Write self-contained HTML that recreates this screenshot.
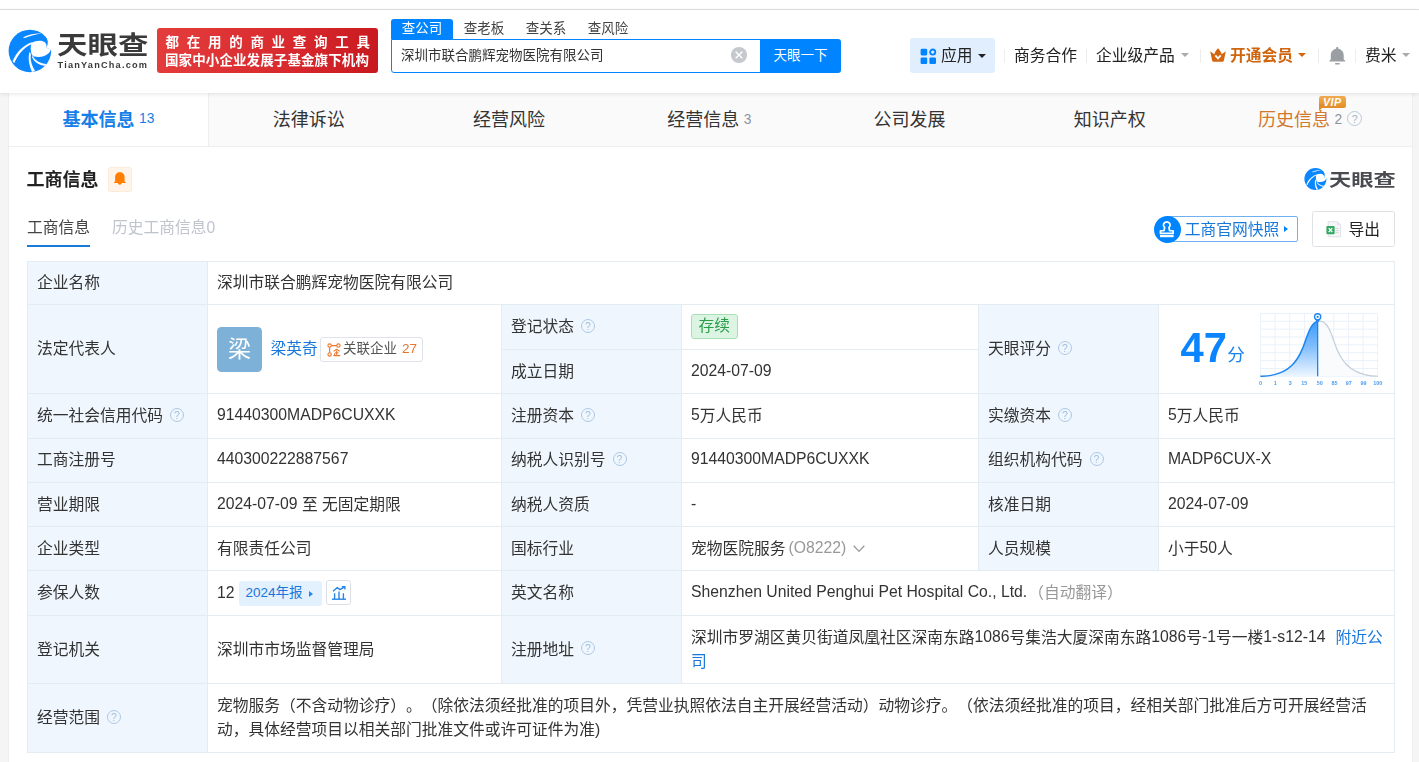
<!DOCTYPE html>
<html lang="zh-CN">
<head>
<meta charset="utf-8">
<title>深圳市联合鹏辉宠物医院有限公司 - 天眼查</title>
<style>
*{box-sizing:border-box;margin:0;padding:0}
html,body{width:1419px;height:762px;overflow:hidden}
body{background:#f5f5f5;font-family:"Liberation Sans","Noto Sans CJK SC",sans-serif;color:#333;font-size:15.75px;position:relative}
.abs{position:absolute}
#header,#tabs,#tb,#sectitle,#subtabs,#snap,#export,#wmname,#score{will-change:opacity}
a{color:#1777da;text-decoration:none}
/* top strip + header */
#topstrip{left:0;top:0;width:1419px;height:9px;background:#fff}
#topline{left:0;top:9px;width:1419px;height:1px;background:#e0e0e0}
#header{left:0;top:10px;width:1419px;height:83px;background:#fff;box-shadow:0 1px 4px rgba(0,0,0,.10);z-index:5}
/* main card */
#card{left:8px;top:93px;width:1405px;height:680px;background:#fff;border-left:1px solid #eee;border-right:1px solid #eee}
#tabs{left:9px;top:93px;width:1403px;height:54px;background:#fafafa;border-bottom:1px solid #eee}
#tabs .tab{position:absolute;top:0;height:53px;width:200.25px;padding-top:0.7px;text-align:center;font-size:18px;line-height:52px;color:#333;white-space:nowrap}
#tabs .tab.on{background:#fff;color:#1580e8;font-weight:bold}
#tabs .tabline{position:absolute;left:199px;top:0;width:1px;height:53px;background:#eee}
#tabs .tab small{font-size:13.8px;font-weight:normal;color:#8c939d;margin-left:4.5px;position:relative;top:-1.5px}
#tabs .tab.on small{color:#1580e8;top:-2.5px}
#tabs .tab.his{color:#d2782c}
#tabs .tab .tq{width:15px;height:15px;line-height:14.2px;font-size:10.5px;margin-left:5px;top:-2px;border-color:#b9cadb;color:#a3b5c8}
.vip{position:absolute;left:109.3px;top:3px;width:27px;height:12px;border-radius:2.5px;background:linear-gradient(180deg,#f2ad52,#e28d26);line-height:11px;text-align:center}
.vip:after{content:"";position:absolute;left:0;top:8px;width:0;height:0;border-left:0 solid transparent;border-right:7px solid transparent;border-top:7px solid #e28d26}
.vip b{position:relative;z-index:1;display:block;font-size:10.6px;font-style:italic;color:#fff;font-family:"Liberation Sans",sans-serif;letter-spacing:0.5px;line-height:12px;text-indent:-1px}

#lgname{left:56.5px;top:19.5px;font-size:25.2px;font-weight:700;color:#3a3a3a;line-height:30px;white-space:nowrap;transform:scaleX(1.21);transform-origin:0 0}
#lgurl{left:57.5px;top:49px;font-size:9.2px;font-weight:bold;color:#3a3a3a;line-height:12px;letter-spacing:1.2px;white-space:nowrap;font-family:"Liberation Sans",sans-serif}
#banner{left:157px;top:18px;width:221px;height:45px;border-radius:3px;background:linear-gradient(100deg,#e43d3d 0%,#d82a2e 60%,#c6181e 100%);color:#fff;font-weight:bold;font-size:13.5px;white-space:nowrap;padding-left:8.5px}
#banner .l1{letter-spacing:7.72px;line-height:18px;padding-top:6px;height:24px}
#banner .l2{line-height:18px;letter-spacing:0.1px;margin-left:-0.5px}
#stabs{left:391px;top:9px;height:20px;font-size:13.5px;line-height:20px;white-space:nowrap;color:#444}
#stabs span{display:inline-block;width:62px;text-align:center}
#stabs span.on{background:#0084ff;color:#fff;border-radius:3px 3px 0 0}
#sbox{left:391px;top:29px;width:370px;height:34px;border:1px solid #0084ff;border-radius:0 0 0 3px;background:#fff}
#sbox .qt{position:absolute;left:9px;top:0;line-height:32px;font-size:13.5px;color:#333;white-space:nowrap}
#sbtn{left:760px;top:29px;width:81px;height:34px;background:#0084ff;color:#fff;font-size:13.5px;line-height:34px;text-align:center;border-radius:0 3px 3px 0}
#app{left:910px;top:28px;width:85px;height:35px;background:#e0eefd;border-radius:3px;font-size:15.75px;line-height:35px;color:#222;white-space:nowrap}
.caret{width:0;height:0;border:4px solid transparent;border-top:4.5px solid #aaa;border-bottom:0}
.sep{width:1px;height:14px;background:#ececec;top:39px}
.nav{top:34px;line-height:24px;font-size:15.75px;color:#222;white-space:nowrap}
.vipn{color:#cf660f;font-weight:bold}

#sectitle{left:26.5px;top:166.8px;font-size:18px;font-weight:bold;line-height:26px;color:#222;white-space:nowrap}
#bellbox{left:108px;top:167px;width:24px;height:25px;background:#fff4ea;border:1px solid #fdebda;border-radius:2.5px}
#subtabs{left:27px;top:216px;line-height:24px;font-size:15.75px;white-space:nowrap}
#subtabs .on{color:#444}
#subtabs .off{color:#c0c4cc;margin-left:22px}
#subline{left:27px;top:245px;width:63px;height:2px;background:#1a7bd8}
#wmname{left:1329.3px;top:165.5px;font-size:17.5px;font-weight:bold;color:#4a4b51;line-height:28px;white-space:nowrap;transform:scaleX(1.27);transform-origin:0 0}
#snap{left:1154px;top:216px;width:144px;height:27px;white-space:nowrap}
#snap:before{content:"";position:absolute;left:13px;top:0px;right:0;height:24px;border:1px solid #6eb0f2;border-radius:0 2px 2px 0;background:#fff}
#snap .ring{position:absolute;left:0;top:0;width:27px;height:27px;border-radius:50%;background:#0084ff}
#snap .t{position:absolute;left:30.8px;top:-0.5px;line-height:27px;font-size:15.75px;color:#1777da}
#snap .tri{position:absolute;left:130px;top:9.5px;width:0;height:0;border:3.8px solid transparent;border-left:4.2px solid #0084ff;border-right:0}
#export{left:1312px;top:211px;width:83px;height:36px;border:1px solid #dfe1e5;border-radius:2.5px;background:#fff;font-size:15.75px;line-height:34px;color:#222}
#export span{position:absolute;left:35.5px;top:1.2px}

#tb{text-spacing-trim:space-all;left:27px;top:261px;width:1367px;border-collapse:collapse;table-layout:fixed;font-size:15.75px;line-height:24px;color:#333}
#tb td{border:1px solid #e3ebf3;padding:0 9px;vertical-align:middle;background:#fff;white-space:nowrap}
#tb td.l{background:#eff6fd;color:#333}
#tb td.ml{white-space:normal}
.q{display:inline-block;width:14px;height:14px;border:1.5px solid #adc9e6;border-radius:50%;font-style:normal;font-size:10.5px;font-weight:normal;line-height:13.6px;text-align:center;color:#a3c0dd;margin-left:7px;vertical-align:middle;position:relative;top:-2px;font-family:"Liberation Sans",sans-serif}
.g{color:#999}
.n{position:relative;top:-1px}
.n12{position:relative;top:0.5px}
.legal{position:relative;height:45px}
.legal .ava{position:absolute;left:0;top:0;width:45px;height:45px;border-radius:4.5px;background:#7eb1d8;color:#fff;font-size:23px;line-height:44px;text-align:center}
.legal .nm{position:absolute;left:53.5px;top:10px;line-height:24px}
.legal .rel{position:absolute;left:102.5px;top:10.5px;height:24.5px;width:103.5px;border:1px solid #dfe2e8;border-radius:3px;font-size:13.5px;line-height:22px}
.legal .rel svg{position:absolute;left:6px;top:4.5px}
.legal .rel em{position:absolute;left:22.5px;top:0;font-style:normal;color:#555}
.legal .rel b{position:absolute;left:81.5px;top:0;font-weight:normal;color:#e8732a}
.st{display:inline-block;height:24.5px;line-height:22.5px;padding:0 6.5px;border:1px solid #a9e0b8;background:#dcf5e3;color:#2a9d4a;border-radius:3px;position:relative;top:-0.5px}
.yr{display:inline-block;height:24.5px;line-height:24.5px;font-size:13.5px;color:#1777da;background:#e3f0fd;border-radius:3px;padding:0 8.5px 0 7px;margin-left:4px;vertical-align:middle;position:relative;top:0px}
.tri2{display:inline-block;width:0;height:0;border:3.7px solid transparent;border-left:4.5px solid #2a86e6;border-right:0;margin-left:6.5px;position:relative;top:0px}
.chartbtn{display:inline-block;width:24.5px;height:24.5px;border:1px solid #dcdfe6;border-radius:3px;margin-left:4.5px;vertical-align:middle;position:relative;top:-1px}
.chartbtn svg{position:absolute;left:5px;top:4.5px}
</style>
</head>
<body>

<div id="topstrip" class="abs"></div>
<div id="topline" class="abs"></div>
<div id="card" class="abs"></div>
<div id="header" class="abs">

<svg class="abs" style="left:4px;top:14px;width:54px;height:54px" viewBox="0 0 762 762"><circle cx="365" cy="380" r="300" fill="#0a86ff"/>
<path d="M525,118 C600,160 645,235 602,335 L662,362 L720,380 L720,60 Z" fill="#fff"/>
<path d="M390,265 C450,232 540,225 580,262 C600,285 604,310 601,336 L662,360 C640,425 560,492 410,455 C375,420 368,330 390,265 Z" fill="#fff"/>
<path d="M120,530 C170,400 280,290 398,258 L388,286 C292,322 200,425 146,550 Z" fill="#fff"/>
<path d="M395,676 C345,560 338,470 362,392 L380,425 C366,505 392,590 438,662 Z" fill="#fff"/>
<path d="M402,448 C440,520 520,560 598,564 L580,592 C500,582 428,542 396,470 Z" fill="#fff"/>
<path d="M266,190 C340,150 440,128 528,134 C450,146 370,166 296,197 Z" fill="#fff"/></svg>
<div class="abs" id="lgname">天眼查</div>
<div class="abs" id="lgurl">TianYanCha.com</div>
<div class="abs" id="banner"><div class="l1">都在用的商业查询工具</div><div class="l2">国家中小企业发展子基金旗下机构</div></div>
<div class="abs" id="stabs"><span class="on">查公司</span><span>查老板</span><span>查关系</span><span>查风险</span></div>
<div class="abs" id="sbox"><span class="qt">深圳市联合鹏辉宠物医院有限公司</span>
<svg class="abs" style="left:337.7px;top:6px" width="18" height="18" viewBox="0 0 18 18"><circle cx="9" cy="9" r="8.1" fill="#c5c8cd"/><path d="M5.7 5.7l6.6 6.6M12.3 5.7l-6.6 6.6" stroke="#fff" stroke-width="1.4" fill="none"/></svg></div>
<div class="abs" id="sbtn">天眼一下</div>
<div class="abs" id="app"><svg class="abs" style="left:10px;top:10px" width="17" height="17" viewBox="0 0 17 17"><rect x="0.6" y="0.8" width="6.6" height="6.6" rx="1.3" fill="#0084ff"/><rect x="0.6" y="9.4" width="6.6" height="6.6" rx="1.3" fill="#0084ff"/><rect x="9.4" y="9.4" width="6.6" height="6.6" rx="1.3" fill="#0084ff"/><circle cx="12.7" cy="4.1" r="2.6" fill="none" stroke="#0084ff" stroke-width="1.8"/></svg><span class="abs" style="left:31px;top:0">应用</span><i class="caret abs" style="left:68px;top:16px;border-top-color:#222"></i></div>
<i class="sep abs" style="left:1004px"></i><span class="nav abs" style="left:1014px">商务合作</span>
<i class="sep abs" style="left:1086px"></i><span class="nav abs" style="left:1096px">企业级产品</span><i class="caret abs" style="left:1181px;top:43px"></i>
<i class="sep abs" style="left:1200px"></i>
<svg class="abs" style="left:1210px;top:38px" width="16" height="14" viewBox="0 0 16 14"><path d="M0.2 3.2 L4.3 6.3 C4.9 3.9 6.4 1.9 8 0.3 C9.6 1.9 11.1 3.9 11.7 6.3 L15.8 3.2 L13.9 12.4 Q13.7 13.8 12.3 13.8 L3.7 13.8 Q2.3 13.8 2.1 12.4 Z" fill="#d4650f"/><path d="M5.3 7.4 L8 10.4 L10.7 7.4" stroke="#fff" stroke-width="1.8" fill="none"/></svg>
<span class="nav abs vipn" style="left:1230px">开通会员</span><i class="caret abs" style="left:1298px;top:43px;border-top-color:#d4650f"></i>
<i class="sep abs" style="left:1318px"></i>
<svg class="abs" style="left:1329px;top:36px" width="17" height="19" viewBox="0 0 17 19"><path d="M8.25 1.1 C8.9 1.1 9.4 1.6 9.4 2.3 L9.4 2.8 C12.4 3.4 14.7 5.8 14.7 9.3 L14.7 13.6 L16.1 14.4 L16.1 15.5 L0.5 15.5 L0.5 14.4 L1.8 13.6 L1.8 9.3 C1.8 5.8 4.1 3.4 7.1 2.8 L7.1 2.3 C7.1 1.6 7.6 1.1 8.25 1.1 Z" fill="#9b9ea3"/><rect x="6" y="17.1" width="4.8" height="1.4" rx="0.7" fill="#9b9ea3"/></svg>
<i class="sep abs" style="left:1355px"></i><span class="nav abs" style="left:1365px">费米</span><i class="caret abs" style="left:1402px;top:43px"></i>

</div>
<div id="tabs" class="abs">
<div class="tab on" style="left:0;width:199px;padding-left:0.00px">基本信息<small>13</small></div>
<div class="tab" style="left:199.62px">法律诉讼</div>
<div class="tab" style="left:399.88px">经营风险</div>
<div class="tab" style="left:600.12px">经营信息<small>3</small></div>
<div class="tab" style="left:800.38px">公司发展</div>
<div class="tab" style="left:1000.62px">知识产权</div>
<div class="tabline"></div>
<div class="tab his" style="left:1200.88px">历史信息<small>2</small><i class="q tq">?</i><span class="vip"><b>VIP</b></span></div>
</div>

<div class="abs" id="sectitle">工商信息</div>
<div class="abs" id="bellbox"><svg width="14" height="14" viewBox="0 0 14 14" style="position:absolute;left:4px;top:4px"><path d="M6.85 0.3 C9.7 0.3 11.6 2.4 11.6 5.2 L11.6 9.5 L12.7 10.3 L12.7 11.1 L1.0 11.1 L1.0 10.3 L2.1 9.5 L2.1 5.2 C2.1 2.4 4.0 0.3 6.85 0.3 Z M4.9 11.1 L8.8 11.1 C8.6 12.2 7.9 12.7 6.85 12.7 C5.8 12.7 5.1 12.2 4.9 11.1 Z" fill="#ff7f00"/></svg></div>
<div class="abs" id="subtabs"><span class="on">工商信息</span><span class="off">历史工商信息0</span></div>
<div class="abs" id="subline"></div>
<svg class="abs" style="left:1301.6px;top:165.3px;width:28px;height:28px" viewBox="0 0 762 762"><circle cx="365" cy="380" r="300" fill="#0a86ff"/>
<path d="M525,118 C600,160 645,235 602,335 L662,362 L720,380 L720,60 Z" fill="#fff"/>
<path d="M390,265 C450,232 540,225 580,262 C600,285 604,310 601,336 L662,360 C640,425 560,492 410,455 C375,420 368,330 390,265 Z" fill="#fff"/>
<path d="M120,530 C170,400 280,290 398,258 L388,286 C292,322 200,425 146,550 Z" fill="#fff"/>
<path d="M395,676 C345,560 338,470 362,392 L380,425 C366,505 392,590 438,662 Z" fill="#fff"/>
<path d="M402,448 C440,520 520,560 598,564 L580,592 C500,582 428,542 396,470 Z" fill="#fff"/>
<path d="M266,190 C340,150 440,128 528,134 C450,146 370,166 296,197 Z" fill="#fff"/></svg>
<div class="abs" id="wmname">天眼查</div>
<div class="abs" id="snap"><span class="ring"><svg width="19.6" height="19" viewBox="0 0 17 17" preserveAspectRatio="none" style="position:absolute;left:2.9px;top:4.2px"><path d="M8.5 1.6 a2.9 2.9 0 0 1 1.9 5.1 L10.9 9.6 L14 9.6 L14 12 L3 12 L3 9.6 L6.1 9.6 L6.6 6.7 A2.9 2.9 0 0 1 8.5 1.6 Z" fill="none" stroke="#fff" stroke-width="1.5" stroke-linejoin="round"/><rect x="2.6" y="13.4" width="11.8" height="2" fill="#fff"/></svg></span><span class="t">工商官网快照</span><i class="tri"></i></div>
<div class="abs" id="export"><svg width="17" height="17" viewBox="0 0 17 17" style="position:absolute;left:13px;top:9px"><path d="M2.2 0.6 L11.2 0.6 L14.6 4 L14.6 15.8 L2.2 15.8 Z" fill="#f5f6f8" stroke="#d9dce1" stroke-width="0.8"/><path d="M11.2 0.6 L11.2 4 L14.6 4 Z" fill="#e1e4e8"/><path d="M9.6 7.4h3M9.6 9.4h3M9.6 11.4h3" stroke="#d4d7dc" stroke-width="1"/><rect x="0.4" y="5" width="8.2" height="8.2" rx="0.9" fill="#33a862"/><path d="M2.7 7.1 L6.3 11.1 M6.3 7.1 L2.7 11.1" stroke="#fff" stroke-width="1.4"/></svg><span>导出</span></div>


<table class="abs" id="tb" cellspacing="0" cellpadding="0">
<colgroup><col style="width:180px"><col style="width:294px"><col style="width:180px"><col style="width:297px"><col style="width:180px"><col style="width:236px"></colgroup>
<tr style="height:43px"><td class="l">企业名称</td><td colspan="5">深圳市联合鹏辉宠物医院有限公司</td></tr>
<tr style="height:45px"><td class="l" rowspan="2">法定代表人</td><td rowspan="2"><div class="legal"><span class="ava">梁</span><a class="nm">梁英奇</a><span class="rel"><svg width="14" height="14" viewBox="0 0 14 14"><g fill="none" stroke="#f0782d" stroke-width="1.1"><circle cx="2.6" cy="2.6" r="1.7"/><circle cx="11.4" cy="2.6" r="1.7"/><circle cx="2.6" cy="11.4" r="1.7"/><path d="M4.3 2.6H9.7M2.6 4.3V9.7"/><path d="M9.6 6.2 L6.6 8.4 M9.6 6.2 L12.8 8.4 M9.7 7.6V12.4 M8 9.8H11.4 M7.6 10.2V12.4 M6.4 12.6H13.2"/></g></svg><em>关联企业</em><b>27</b></span></div></td><td class="l">登记状态<i class="q">?</i></td><td><span class="st">存续</span></td><td class="l" rowspan="2">天眼评分<i class="q">?</i></td><td rowspan="2" class="scoretd"><!--SCORE--></td></tr>
<tr style="height:44px"><td class="l">成立日期</td><td><span class="n">2024-07-09</span></td></tr>
<tr style="height:44.5px"><td class="l">统一社会信用代码<i class="q">?</i></td><td><span class="n">91440300MADP6CUXXK</span></td><td class="l">注册资本<i class="q">?</i></td><td><span class="n">5</span>万人民币</td><td class="l">实缴资本<i class="q">?</i></td><td><span class="n">5</span>万人民币</td></tr>
<tr style="height:44.5px"><td class="l">工商注册号</td><td><span class="n">440300222887567</span></td><td class="l">纳税人识别号<i class="q">?</i></td><td><span class="n">91440300MADP6CUXXK</span></td><td class="l">组织机构代码<i class="q">?</i></td><td><span class="n">MADP6CUX-X</span></td></tr>
<tr style="height:44px"><td class="l">营业期限</td><td><span class="n">2024-07-09</span> 至 无固定期限</td><td class="l">纳税人资质</td><td><span class="n">-</span></td><td class="l">核准日期</td><td><span class="n">2024-07-09</span></td></tr>
<tr style="height:44px"><td class="l">企业类型</td><td>有限责任公司</td><td class="l">国标行业</td><td>宠物医院服务<span class="g n" style="margin-left:3px">(O8222)</span><svg width="12" height="8" viewBox="0 0 12 8" style="margin-left:7px;position:relative;top:-1px"><path d="M0.7 0.8 L6 6.4 L11.3 0.8" fill="none" stroke="#999" stroke-width="1.3"/></svg></td><td class="l">人员规模</td><td>小于<span class="n">50</span>人</td></tr>
<tr style="height:45px"><td class="l">参保人数</td><td><span class="n12">12</span><span class="yr">2024年报<i class="tri2"></i></span><span class="chartbtn"><svg width="14" height="14" viewBox="0 0 14 14"><g fill="none" stroke="#2a86e6" stroke-width="1.4"><path d="M0 13.2H14"/><path d="M2.6 13V7.2M7 13V5.6M11.4 13V7.2"/><path d="M1 5.2 L5.2 1.6 L8 3.6 L12.6 0.8"/><path d="M9.8 0.7H12.9V3.6"/></g></svg></span></td><td class="l">英文名称</td><td colspan="3"><span class="n">Shenzhen United Penghui Pet Hospital Co., Ltd.</span><span class="g" style="margin-left:1px">（自动翻译）</span></td></tr>
<tr style="height:68px"><td class="l">登记机关</td><td>深圳市市场监督管理局</td><td class="l">注册地址<i class="q">?</i></td><td colspan="3" class="ml">深圳市罗湖区黄贝街道凤凰社区深南东路<span class="n">1086</span>号集浩大厦深南东路<span class="n">1086</span>号<span class="n">-1</span>号一楼<span class="n">1-s12-14</span><a style="margin-left:10px">附近公司</a></td></tr>
<tr style="height:69px"><td class="l">经营范围<i class="q">?</i></td><td colspan="5" class="ml">宠物服务（不含动物诊疗）。（除依法须经批准的项目外，凭营业执照依法自主开展经营活动）动物诊疗。（依法须经批准的项目，经相关部门批准后方可开展经营活动，具体经营项目以相关部门批准文件或许可证件为准)</td></tr>
</table>
<svg class="abs" id="score" style="left:1159px;top:305px" width="235" height="88" viewBox="0 0 235 88">
<defs><linearGradient id="sg" x1="0" y1="0" x2="0" y2="1"><stop offset="0" stop-color="#3a9bff"/><stop offset="0.45" stop-color="#7fbdfd"/><stop offset="1" stop-color="#eef6ff"/></linearGradient>
<clipPath id="cl"><rect x="0" y="0" width="158.65" height="88"/></clipPath><clipPath id="cr"><rect x="158.65" y="0" width="100" height="88"/></clipPath></defs>
<text x="21.6" y="57.2" font-family="Liberation Sans,sans-serif" font-weight="bold" font-size="42.4" textLength="46.4" lengthAdjust="spacingAndGlyphs" fill="#0a84ff">47</text>
<text x="68.3" y="56" font-family="Liberation Sans,Noto Sans CJK SC,sans-serif" font-size="17.6" fill="#1a83ee">分</text>
<path d="M101.38,8.38 V71.35 M116.05,8.38 V71.35 M130.71,8.38 V71.35 M145.38,8.38 V71.35 M160.05,8.38 V71.35 M174.71,8.38 V71.35 M189.38,8.38 V71.35 M204.05,8.38 V71.35 M218.71,8.38 V71.35 M101.38,8.38 H218.71 M101.38,16.25 H218.71 M101.38,24.12 H218.71 M101.38,32.00 H218.71 M101.38,39.87 H218.71 M101.38,47.74 H218.71 M101.38,55.61 H218.71 M101.38,63.48 H218.71 M101.38,71.35 H218.71 " stroke="#e9f1fb" stroke-width="1" fill="none"/>
<path d="M101.38,71.35 C103.18,71.19 108.92,70.96 112.15,70.38 C115.38,69.81 118.07,68.97 120.76,67.91 C123.45,66.85 126.14,65.43 128.29,64.03 C130.45,62.63 131.88,61.43 133.67,59.51 C135.47,57.59 137.44,55.12 139.06,52.52 C140.67,49.91 141.93,47.28 143.36,43.90 C144.80,40.53 146.41,35.56 147.67,32.28 C148.92,29.00 149.82,26.38 150.90,24.21 C151.97,22.03 153.05,20.49 154.13,19.25 C155.20,18.02 156.28,17.30 157.36,16.78 C158.43,16.26 159.51,16.13 160.59,16.13 C161.66,16.13 162.74,16.26 163.81,16.78 C164.89,17.30 165.97,18.02 167.04,19.25 C168.12,20.49 169.20,22.03 170.27,24.21 C171.35,26.38 172.25,29.00 173.50,32.28 C174.76,35.56 176.37,40.53 177.81,43.90 C179.24,47.28 180.50,49.91 182.11,52.52 C183.73,55.12 185.70,57.59 187.50,59.51 C189.29,61.43 190.73,62.63 192.88,64.03 C195.03,65.43 197.72,66.85 200.41,67.91 C203.10,68.97 205.97,69.81 209.02,70.38 C212.07,70.96 217.10,71.19 218.71,71.35 Z" fill="#fafbfd" clip-path="url(#cr)"/>
<path d="M101.38,71.35 C103.18,71.19 108.92,70.96 112.15,70.38 C115.38,69.81 118.07,68.97 120.76,67.91 C123.45,66.85 126.14,65.43 128.29,64.03 C130.45,62.63 131.88,61.43 133.67,59.51 C135.47,57.59 137.44,55.12 139.06,52.52 C140.67,49.91 141.93,47.28 143.36,43.90 C144.80,40.53 146.41,35.56 147.67,32.28 C148.92,29.00 149.82,26.38 150.90,24.21 C151.97,22.03 153.05,20.49 154.13,19.25 C155.20,18.02 156.28,17.30 157.36,16.78 C158.43,16.26 159.51,16.13 160.59,16.13 C161.66,16.13 162.74,16.26 163.81,16.78 C164.89,17.30 165.97,18.02 167.04,19.25 C168.12,20.49 169.20,22.03 170.27,24.21 C171.35,26.38 172.25,29.00 173.50,32.28 C174.76,35.56 176.37,40.53 177.81,43.90 C179.24,47.28 180.50,49.91 182.11,52.52 C183.73,55.12 185.70,57.59 187.50,59.51 C189.29,61.43 190.73,62.63 192.88,64.03 C195.03,65.43 197.72,66.85 200.41,67.91 C203.10,68.97 205.97,69.81 209.02,70.38 C212.07,70.96 217.10,71.19 218.71,71.35" fill="none" stroke="#c2cedb" stroke-width="1.25" clip-path="url(#cr)"/>
<path d="M101.38,71.35 C103.18,71.19 108.92,70.96 112.15,70.38 C115.38,69.81 118.07,68.97 120.76,67.91 C123.45,66.85 126.14,65.43 128.29,64.03 C130.45,62.63 131.88,61.43 133.67,59.51 C135.47,57.59 137.44,55.12 139.06,52.52 C140.67,49.91 141.93,47.28 143.36,43.90 C144.80,40.53 146.41,35.56 147.67,32.28 C148.92,29.00 149.82,26.38 150.90,24.21 C151.97,22.03 153.05,20.49 154.13,19.25 C155.20,18.02 156.28,17.30 157.36,16.78 C158.43,16.26 159.51,16.13 160.59,16.13 C161.66,16.13 162.74,16.26 163.81,16.78 C164.89,17.30 165.97,18.02 167.04,19.25 C168.12,20.49 169.20,22.03 170.27,24.21 C171.35,26.38 172.25,29.00 173.50,32.28 C174.76,35.56 176.37,40.53 177.81,43.90 C179.24,47.28 180.50,49.91 182.11,52.52 C183.73,55.12 185.70,57.59 187.50,59.51 C189.29,61.43 190.73,62.63 192.88,64.03 C195.03,65.43 197.72,66.85 200.41,67.91 C203.10,68.97 205.97,69.81 209.02,70.38 C212.07,70.96 217.10,71.19 218.71,71.35 Z" fill="url(#sg)" clip-path="url(#cl)"/>
<path d="M101.38,71.35 C103.18,71.19 108.92,70.96 112.15,70.38 C115.38,69.81 118.07,68.97 120.76,67.91 C123.45,66.85 126.14,65.43 128.29,64.03 C130.45,62.63 131.88,61.43 133.67,59.51 C135.47,57.59 137.44,55.12 139.06,52.52 C140.67,49.91 141.93,47.28 143.36,43.90 C144.80,40.53 146.41,35.56 147.67,32.28 C148.92,29.00 149.82,26.38 150.90,24.21 C151.97,22.03 153.05,20.49 154.13,19.25 C155.20,18.02 156.28,17.30 157.36,16.78 C158.43,16.26 159.51,16.13 160.59,16.13 C161.66,16.13 162.74,16.26 163.81,16.78 C164.89,17.30 165.97,18.02 167.04,19.25 C168.12,20.49 169.20,22.03 170.27,24.21 C171.35,26.38 172.25,29.00 173.50,32.28 C174.76,35.56 176.37,40.53 177.81,43.90 C179.24,47.28 180.50,49.91 182.11,52.52 C183.73,55.12 185.70,57.59 187.50,59.51 C189.29,61.43 190.73,62.63 192.88,64.03 C195.03,65.43 197.72,66.85 200.41,67.91 C203.10,68.97 205.97,69.81 209.02,70.38 C212.07,70.96 217.10,71.19 218.71,71.35" fill="none" stroke="#1d86ee" stroke-width="1.5" clip-path="url(#cl)"/>
<path d="M158.65,14.83 V71.35" stroke="#1d86ee" stroke-width="1.3"/>
<path d="M156.05,14.23 L158.65,18.03 L161.25,14.23 Z" fill="#1d86ee"/>
<circle cx="158.65" cy="11.83" r="3.1" fill="#fff" stroke="#1d86ee" stroke-width="1.3"/>
<circle cx="158.65" cy="11.83" r="1.15" fill="#1d86ee"/>
<g transform="scale(0.5)" font-family="Liberation Sans,sans-serif" font-weight="bold" font-size="10.8" fill="#4a9cf2"><text x="203.2" y="159.3" text-anchor="middle">0</text><text x="232.5" y="159.3" text-anchor="middle">1</text><text x="262.4" y="159.3" text-anchor="middle">3</text><text x="290.6" y="159.3" text-anchor="middle">15</text><text x="321.6" y="159.3" text-anchor="middle">50</text><text x="350.9" y="159.3" text-anchor="middle">85</text><text x="379.7" y="159.3" text-anchor="middle">97</text><text x="409.0" y="159.3" text-anchor="middle">99</text><text x="437.4" y="159.3" text-anchor="middle">100</text></g>
</svg>

</body>
</html>
